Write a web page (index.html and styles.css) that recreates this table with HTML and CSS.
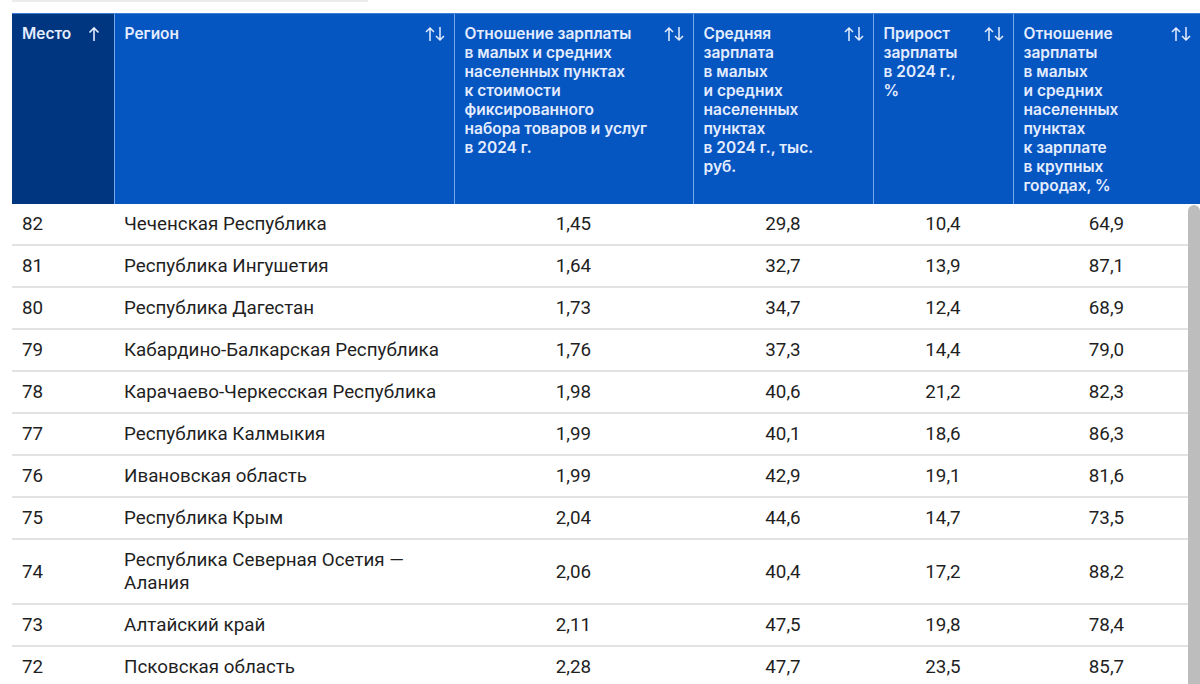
FILE: index.html
```html
<!DOCTYPE html>
<html lang="ru">
<head>
<meta charset="utf-8">
<link rel="stylesheet" href="styles.css">
</head>
<body>
<div class="topbar"></div>
<table class="rating">
  <colgroup>
    <col class="c-place"><col class="c-region"><col class="c-ratio"><col class="c-avg"><col class="c-growth"><col class="c-share">
  </colgroup>
  <thead>
    <tr>
      <th class="th-place"><div class="th-in"><span>Место</span>
        <svg class="sort" width="12" height="16" viewBox="0 0 12 16"><path d="M6 15V2M1.5 6.5L6 2l4.5 4.5" fill="none" stroke="currentColor" stroke-width="1.6"/></svg></div></th>
      <th><div class="th-in"><span>Регион</span>
        <svg class="sort" width="20" height="16" viewBox="0 0 20 16"><path d="M5 15V2M1 6L5 2l4 4M15 1v13M11 10l4 4 4-4" fill="none" stroke="currentColor" stroke-width="1.5"/></svg></div></th>
      <th><div class="th-in"><span>Отношение зарплаты<br>в малых и средних<br>населенных пунктах<br>к стоимости<br>фиксированного<br>набора товаров и услуг<br>в 2024 г.</span>
        <svg class="sort" width="20" height="16" viewBox="0 0 20 16"><path d="M5 15V2M1 6L5 2l4 4M15 1v13M11 10l4 4 4-4" fill="none" stroke="currentColor" stroke-width="1.5"/></svg></div></th>
      <th><div class="th-in"><span>Средняя<br>зарплата<br>в малых<br>и средних<br>населенных<br>пунктах<br>в 2024 г., тыс.<br>руб.</span>
        <svg class="sort" width="20" height="16" viewBox="0 0 20 16"><path d="M5 15V2M1 6L5 2l4 4M15 1v13M11 10l4 4 4-4" fill="none" stroke="currentColor" stroke-width="1.5"/></svg></div></th>
      <th><div class="th-in"><span>Прирост<br>зарплаты<br>в 2024 г.,<br>%</span>
        <svg class="sort" width="20" height="16" viewBox="0 0 20 16"><path d="M5 15V2M1 6L5 2l4 4M15 1v13M11 10l4 4 4-4" fill="none" stroke="currentColor" stroke-width="1.5"/></svg></div></th>
      <th><div class="th-in"><span>Отношение<br>зарплаты<br>в малых<br>и средних<br>населенных<br>пунктах<br>к зарплате<br>в крупных<br>городах, %</span>
        <svg class="sort" width="20" height="16" viewBox="0 0 20 16"><path d="M5 15V2M1 6L5 2l4 4M15 1v13M11 10l4 4 4-4" fill="none" stroke="currentColor" stroke-width="1.5"/></svg></div></th>
    </tr>
  </thead>
  <tbody>
    <tr><td>82</td><td>Чеченская Республика</td><td class="num">1,45</td><td class="num">29,8</td><td class="num">10,4</td><td class="num">64,9</td></tr>
    <tr><td>81</td><td>Республика Ингушетия</td><td class="num">1,64</td><td class="num">32,7</td><td class="num">13,9</td><td class="num">87,1</td></tr>
    <tr><td>80</td><td>Республика Дагестан</td><td class="num">1,73</td><td class="num">34,7</td><td class="num">12,4</td><td class="num">68,9</td></tr>
    <tr><td>79</td><td>Кабардино-Балкарская Республика</td><td class="num">1,76</td><td class="num">37,3</td><td class="num">14,4</td><td class="num">79,0</td></tr>
    <tr><td>78</td><td>Карачаево-Черкесская Республика</td><td class="num">1,98</td><td class="num">40,6</td><td class="num">21,2</td><td class="num">82,3</td></tr>
    <tr><td>77</td><td>Республика Калмыкия</td><td class="num">1,99</td><td class="num">40,1</td><td class="num">18,6</td><td class="num">86,3</td></tr>
    <tr><td>76</td><td>Ивановская область</td><td class="num">1,99</td><td class="num">42,9</td><td class="num">19,1</td><td class="num">81,6</td></tr>
    <tr><td>75</td><td>Республика Крым</td><td class="num">2,04</td><td class="num">44,6</td><td class="num">14,7</td><td class="num">73,5</td></tr>
    <tr><td>74</td><td>Республика Северная Осетия —<br>Алания</td><td class="num">2,06</td><td class="num">40,4</td><td class="num">17,2</td><td class="num">88,2</td></tr>
    <tr><td>73</td><td>Алтайский край</td><td class="num">2,11</td><td class="num">47,5</td><td class="num">19,8</td><td class="num">78,4</td></tr>
    <tr><td>72</td><td>Псковская область</td><td class="num">2,28</td><td class="num">47,7</td><td class="num">23,5</td><td class="num">85,7</td></tr>
  </tbody>
</table>
<div class="vscroll"></div>
</body>
</html>
```
FILE: styles.css
```css
html, body {
  margin: 0;
  padding: 0;
  background: #ffffff;
  width: 1200px;
  height: 684px;
  overflow: hidden;
}
body {
  position: relative;
  font-family: Roboto, "Liberation Sans", sans-serif;
}
.topbar {
  margin-left: 12px;
  width: 356px;
  height: 2px;
  background: #ececec;
}
.rating {
  margin: 11px 0 0 12px;
  width: 1188px;
  table-layout: fixed;
  border-collapse: collapse;
  border-spacing: 0;
}
.c-place { width: 102px; }
.c-region { width: 340px; }
.c-ratio { width: 239px; }
.c-avg { width: 180px; }
.c-growth { width: 140px; }
.c-share { width: 187px; }

.rating th {
  background: #0656c2;
  color: #e4edff;
  font-family: Inter, "Liberation Sans", sans-serif;
  font-weight: 600;
  font-size: 15.5px;
  line-height: 19px;
  text-align: left;
  vertical-align: top;
  padding: 10px 9px 9px 10px;
  border-left: 1px solid #74a6ee;
  border-top: 1px solid #3d7fd8;
}
.rating th:first-child { border-left: none; }
.rating th.th-place { background: #00357f; }
.th-in {
  display: flex;
  justify-content: space-between;
  align-items: flex-start;
}
.sort {
  flex: none;
  margin-top: 2px;
  color: #e4edff;
}
.th-place .sort { margin-right: 5px; }

.rating td {
  font-size: 18.8px;
  line-height: 23px;
  color: #1f1f1f;
  padding: 9px 10px 8px 10px;
  border-bottom: 2px solid #e2e2e2;
  vertical-align: middle;
}
.rating td.num { text-align: center; }

.vscroll {
  position: absolute;
  right: 0;
  top: 205px;
  width: 12px;
  height: 479px;
  background: #bdbdbd;
  border-radius: 6px 6px 0 0;
}
```
